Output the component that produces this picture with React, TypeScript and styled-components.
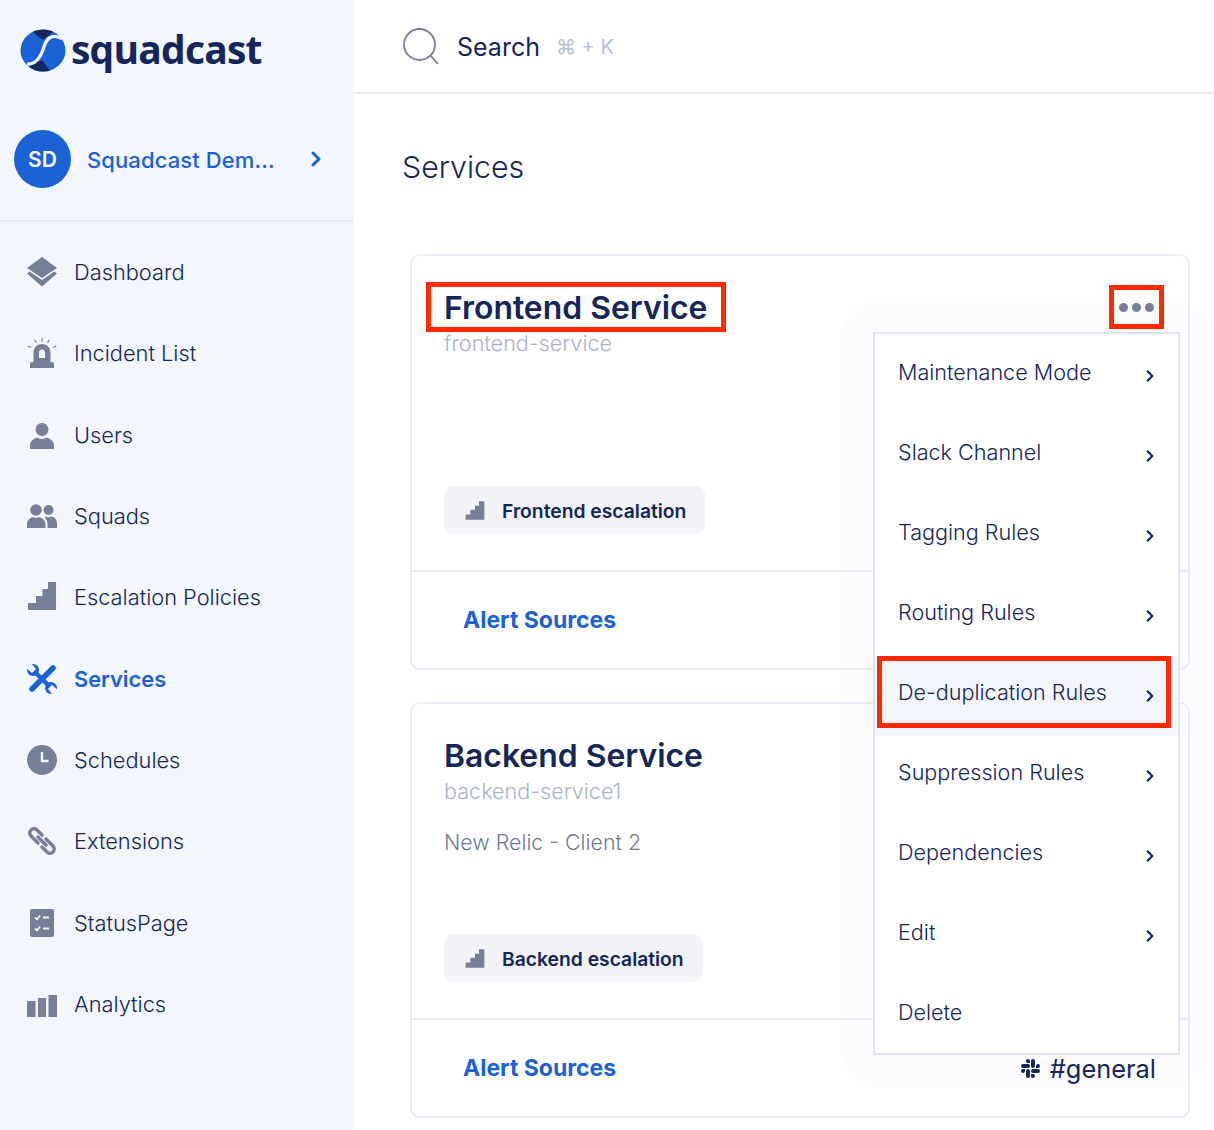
import { ChevronRight } from 'lucide-react'
import { SiSlack } from 'react-icons/si'
import styled, { createGlobalStyle } from 'styled-components'

const NAVY = '#14265a'
const BLUE = '#1b62d4'
const ICON = '#767f98'
const SIDE_BG = '#f3f6fc'

const GlobalStyle = createGlobalStyle`
  html, body { margin: 0; padding: 0; height: 1130px; overflow: hidden; background: #fff; }
  * { box-sizing: border-box; }
  body { font-family: Inter, "Liberation Sans", sans-serif; color: ${NAVY}; }
`

const Stairs = () => (
  <svg viewBox="0 0 30 28" width="100%" height="100%" fill="currentColor">
    <path d="M1 28V20H8V13H15V7H21V0H29V28Z" />
  </svg>
)

const icons: Record<string, JSX.Element> = {
  Dashboard: (
    <svg viewBox="0 0 30 30" width="30" height="30" fill={ICON}>
      <path d="M15 0L30 11L15 21L0 11Z" />
      <path d="M0 16.5L2.6 14.6L15 23L27.4 14.6L30 16.5L15 29.5Z" />
    </svg>
  ),
  'Incident List': (
    <svg viewBox="0 0 30 30" width="30" height="30" fill={ICON}>
      <path d="M15 6C9.5 6 6.5 10 6.5 15V25H23.5V15C23.5 10 20.5 6 15 6ZM12 20V14.5C12 12.5 13.3 11.5 15 11.5S18 12.5 18 14.5V20Z" fillRule="evenodd" />
      <path d="M5 24H25Q27 24 27 26V30H3V26Q3 24 5 24Z" />
      <path d="M14.5 0H15.5V4H14.5ZM7 2L8 1.5L10 4.5L9 5ZM23 2L22 1.5L20 4.5L21 5ZM0.5 8.5L1 7.5L4.5 9L4 10ZM29.5 8.5L29 7.5L25.5 9L26 10Z" />
    </svg>
  ),
  Users: (
    <svg viewBox="0 0 30 30" width="30" height="30" fill={ICON}>
      <circle cx="15" cy="9.5" r="6.5" />
      <path d="M3 29V25.5C3 21 7 18.5 10.5 17.5Q15 21 19.5 17.5C23 18.5 27 21 27 25.5V29Z" />
    </svg>
  ),
  Squads: (
    <svg viewBox="0 0 30 30" width="30" height="30" fill={ICON}>
      <circle cx="9" cy="9" r="5.8" />
      <circle cx="21.5" cy="9" r="5" />
      <path d="M0 27V23C0 19 3.5 16.5 6 16Q9 18 12 16C15.5 16.8 18.5 19.5 18.5 23V27Z" />
      <path d="M20.5 27V22.5C20.5 20 19 18 17.5 16.8L18.5 15.5Q21.5 17 24.5 15.5C27.5 16 30 18.5 30 22V27Z" />
    </svg>
  ),
  'Escalation Policies': (
    <svg viewBox="0 0 30 30" width="30" height="30" fill={ICON}>
      <path d="M1 28V21H9V14H15.5V7H21V0H29V28Z" />
    </svg>
  ),
  Services: (
    <svg viewBox="0 0 30 30" width="30" height="30">
      <path d="M7 7L24 24" stroke={BLUE} strokeWidth="4.5" />
      <path d="M26 4L5 25" stroke={BLUE} strokeWidth="5.5" strokeLinecap="round" />
      <circle cx="6" cy="6" r="6" fill={BLUE} />
      <circle cx="24" cy="24" r="6" fill={BLUE} />
      <path d="M-1 4L4 -1L9 5L5 9ZM31 26L26 31L21 25L25 21Z" fill={SIDE_BG} />
    </svg>
  ),
  Schedules: (
    <svg viewBox="0 0 30 30" width="30" height="30">
      <circle cx="15" cy="15" r="15" fill={ICON} />
      <path d="M15 7V16H21.5" fill="none" stroke={SIDE_BG} strokeWidth="2.4" />
    </svg>
  ),
  Extensions: (
    <svg viewBox="0 0 30 30" width="30" height="30" fill="none" stroke={ICON} strokeWidth="3.4" strokeLinecap="round">
      <path d="M11 17L4 10A4.24 4.24 0 0 1 10 4L15 9" />
      <path d="M19 13L26 20A4.24 4.24 0 0 1 20 26L15 21" />
      <path d="M11 11L19 19" />
    </svg>
  ),
  StatusPage: (
    <svg viewBox="0 0 30 30" width="30" height="30">
      <rect x="3" y="1" width="24" height="28" rx="2" fill={ICON} />
      <path d="M8 9.5L10 11.5L13 7.5M8 20.5L10 22.5L13 18.5" fill="none" stroke={SIDE_BG} strokeWidth="1.8" />
      <path d="M16 9.5H22M16 20.5H22" stroke={SIDE_BG} strokeWidth="1.8" />
    </svg>
  ),
  Analytics: (
    <svg viewBox="0 0 30 30" width="30" height="30" fill={ICON}>
      <path d="M0 12H8.5V28H0ZM11 9H19V28H11ZM21.5 6H30V28H21.5Z" />
    </svg>
  ),
}

const navItems = [
  'Dashboard',
  'Incident List',
  'Users',
  'Squads',
  'Escalation Policies',
  'Services',
  'Schedules',
  'Extensions',
  'StatusPage',
  'Analytics',
]

const menuItems = [
  'Maintenance Mode',
  'Slack Channel',
  'Tagging Rules',
  'Routing Rules',
  'De-duplication Rules',
  'Suppression Rules',
  'Dependencies',
  'Edit',
  'Delete',
]

function Logo() {
  return (
    <LogoRow>
      <svg viewBox="0 0 46 43" width="46" height="43">
        <defs>
          <clipPath id="logo-disc">
            <ellipse cx="23" cy="21.5" rx="22.5" ry="21" />
          </clipPath>
        </defs>
        <g clipPath="url(#logo-disc)">
          <rect width="46" height="43" fill={BLUE} />
          <path d="M9 0H36L23 11ZM6 39L22 31L31 43H6Z" fill={NAVY} />
        </g>
        <path d="M42 10C31 3 26 11 23.5 19C21 28 15 36 7 35" fill="none" stroke={SIDE_BG} strokeWidth="3.2" />
      </svg>
      <LogoText>squadcast</LogoText>
    </LogoRow>
  )
}

function ServiceCard({ name, slug, note, escalation, channel, marked }: {
  name: string
  slug: string
  note?: string
  escalation: string
  channel?: string
  marked?: boolean
}) {
  return (
    <Card>
      <CardBody>
        <CardTitle $marked={marked}>{name}</CardTitle>
        <Slug>{slug}</Slug>
        {note && <Note>{note}</Note>}
        <Chip>
          <ChipIcon><Stairs /></ChipIcon>
          {escalation}
        </Chip>
      </CardBody>
      <CardFooter>
        <AlertLink>Alert Sources</AlertLink>
        {channel && (
          <Channel>
            <SiSlack size={19} />
            {channel}
          </Channel>
        )}
      </CardFooter>
      {marked && (
        <>
          <MoreButton><i /><i /><i /></MoreButton>
          <MenuGlow>
            <Menu>
              {menuItems.map((item) => (
                <MenuItem key={item} $marked={item === 'De-duplication Rules'}>
                  <span>{item}</span>
                  {item !== 'Delete' && <ChevronRight size={18} strokeWidth={3} />}
                </MenuItem>
              ))}
            </Menu>
          </MenuGlow>
        </>
      )}
    </Card>
  )
}

export default function App() {
  return (
    <Page>
      <GlobalStyle />
      <Sidebar>
        <SideTop>
          <Logo />
          <OrgRow>
            <Avatar>SD</Avatar>
            <OrgName>Squadcast Dem...</OrgName>
            <ChevronRight size={24} strokeWidth={3} color={BLUE} />
          </OrgRow>
        </SideTop>
        <Nav>
          {navItems.map((item) => (
            <NavItem key={item} $active={item === 'Services'}>
              <NavIcon>{icons[item]}</NavIcon>
              {item}
            </NavItem>
          ))}
        </Nav>
      </Sidebar>
      <Main>
        <TopBar>
          <svg viewBox="0 0 36 38" width="36" height="38" fill="none" stroke={ICON} strokeWidth="1.8">
            <circle cx="16.5" cy="16.5" r="15.5" />
            <path d="M27.5 27.5L35 36" />
          </svg>
          <SearchLabel>Search</SearchLabel>
          <Shortcut>⌘ + K</Shortcut>
        </TopBar>
        <Content>
          <PageTitle>Services</PageTitle>
          <CardList>
            <ServiceCard marked name="Frontend Service" slug="frontend-service" escalation="Frontend escalation" />
            <ServiceCard
              name="Backend Service"
              slug="backend-service1"
              note="New Relic - Client 2"
              escalation="Backend escalation"
              channel="#general"
            />
          </CardList>
        </Content>
      </Main>
    </Page>
  )
}

const Page = styled.div`
  display: flex;
  width: 1214px;
  height: 1130px;
  overflow: hidden;
`
const Sidebar = styled.aside`
  flex: 0 0 354px;
  background: ${SIDE_BG};
`
const SideTop = styled.div`
  height: 222px;
  padding: 29px 0 0 14px;
  border-bottom: 2px solid #e8ecf5;
`
const LogoRow = styled.div`
  display: flex;
  align-items: center;
  gap: 5px;
  height: 43px;
  padding-left: 6px;
`
const LogoText = styled.span`
  margin-top: -5px;
  font-family: "Open Sans", sans-serif;
  font-weight: 700;
  font-size: 39px;
  letter-spacing: -0.8px;
  line-height: 43px;
  color: ${NAVY};
`
const OrgRow = styled.div`
  display: flex;
  align-items: center;
  margin-top: 58px;
  color: ${BLUE};
`
const Avatar = styled.div`
  display: flex;
  align-items: center;
  justify-content: center;
  width: 57px;
  height: 58px;
  border-radius: 50%;
  background: ${BLUE};
  color: #fff;
  font-weight: 600;
  font-size: 21px;
`
const OrgName = styled.div`
  width: 217px;
  margin-left: 16px;
  padding-top: 2px;
  font-weight: 500;
  font-size: 22px;
  letter-spacing: 0.1px;
`
const Nav = styled.nav`
  padding-top: 9.5px;
`
const NavItem = styled.div<{ $active?: boolean }>`
  display: flex;
  align-items: center;
  gap: 17px;
  height: 81.3px;
  padding-left: 27px;
  font-size: 21.8px;
  font-weight: ${(p) => (p.$active ? 600 : 300)};
  color: ${(p) => (p.$active ? BLUE : NAVY)};
`
const NavIcon = styled.span`
  display: flex;
  width: 30px;
  height: 30px;
`
const Main = styled.main`
  flex: 1;
  min-width: 0;
`
const TopBar = styled.header`
  display: flex;
  align-items: center;
  height: 94px;
  padding: 2px 0 0 49px;
  border-bottom: 2px solid #e8ebf3;
`
const SearchLabel = styled.span`
  margin-left: 18px;
  font-size: 25px;
`
const Shortcut = styled.span`
  margin-left: 16px;
  font-size: 20px;
  color: #b7c1d8;
`
const Content = styled.div`
  padding: 53px 24px 0 48px;
`
const PageTitle = styled.h1`
  margin: 0;
  font-weight: 300;
  font-size: 30.3px;
  line-height: 40px;
`
const CardList = styled.div`
  display: flex;
  flex-direction: column;
  gap: 32px;
  margin: 67px 0 0 8px;
`
const Card = styled.section`
  position: relative;
  height: 416px;
  display: flex;
  flex-direction: column;
  border: 2px solid #e6ebf5;
  border-radius: 10px;
  background: #fff;
`
const CardBody = styled.div`
  flex: 0 0 314px;
  display: flex;
  flex-direction: column;
  align-items: flex-start;
  padding: 32px 0 36px 32px;
`
const CardTitle = styled.h2<{ $marked?: boolean }>`
  position: relative;
  margin: 0;
  font-weight: 600;
  font-size: 31.9px;
  line-height: 40px;
  ${(p) =>
    p.$marked &&
    `&::after {
      content: '';
      position: absolute;
      inset: -6px -19px -4px -18px;
      border: 5px solid #ff2a00;
    }`}
`
const Slug = styled.div`
  margin-top: -1px;
  font-size: 21.6px;
  font-weight: 300;
  line-height: 32px;
  color: #a9b4cc;
`
const Note = styled.div`
  margin-top: 19px;
  font-size: 21.4px;
  font-weight: 300;
  line-height: 32px;
  color: #6f7b96;
`
const Chip = styled.div`
  display: flex;
  align-items: center;
  gap: 17px;
  height: 48px;
  margin-top: auto;
  padding: 1px 19px 0 21px;
  border-radius: 9px;
  background: #f1f3f6;
  font-weight: 600;
  font-size: 19.3px;
`
const ChipIcon = styled.span`
  display: flex;
  width: 20px;
  height: 19px;
  color: ${ICON};
`
const CardFooter = styled.div`
  flex: 1;
  display: flex;
  align-items: center;
  justify-content: space-between;
  padding: 0 32px 0 51px;
  border-top: 2px solid #e6ebf5;
`
const AlertLink = styled.span`
  font-weight: 700;
  font-size: 23px;
  color: ${BLUE};
`
const Channel = styled.span`
  position: relative;
  z-index: 3;
  display: flex;
  align-items: center;
  gap: 10px;
  font-size: 25.4px;
`
const MoreButton = styled.div`
  position: absolute;
  z-index: 3;
  top: 29px;
  right: 24px;
  display: flex;
  align-items: center;
  justify-content: center;
  gap: 4px;
  width: 55px;
  height: 44px;
  border: 5px solid #ff2a00;
  i {
    width: 9px;
    height: 9px;
    border-radius: 50%;
    background: ${ICON};
  }
`
const MenuGlow = styled.div`
  position: absolute;
  z-index: 2;
  top: 43px;
  right: -25px;
  padding: 33px;
  border-radius: 44px;
  background: rgba(225, 230, 242, 0.1);
`
const Menu = styled.div`
  width: 307px;
  height: 723px;
  padding-top: 2px;
  border: 2px solid #dfe5f0;
  background: #fff;
`
const MenuItem = styled.div<{ $marked?: boolean }>`
  position: relative;
  display: flex;
  align-items: center;
  justify-content: space-between;
  height: 80px;
  padding: 0 19px 0 23px;
  font-size: 21.6px;
  font-weight: 300;
  background: ${(p) => (p.$marked ? SIDE_BG : 'transparent')};
  span {
    position: relative;
    top: -4px;
  }
  ${(p) =>
    p.$marked &&
    `&::after {
      content: '';
      position: absolute;
      inset: 0 7px 8px 2px;
      border: 5px solid #ff2a00;
    }`}
`
